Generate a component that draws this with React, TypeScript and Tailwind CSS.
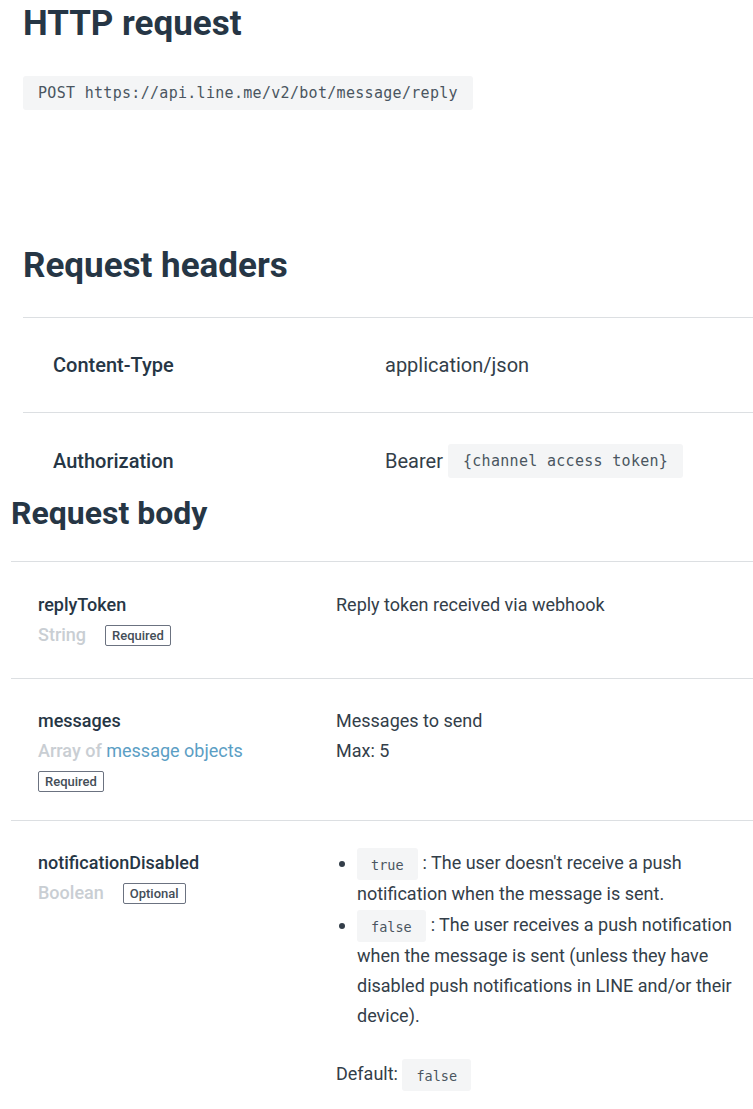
const mono = "font-['DejaVu_Sans_Mono','Liberation_Mono',monospace]"

function Code({ children, className }: { children: React.ReactNode; className?: string }) {
  return (
    <code className={`${mono} inline-block bg-[#f4f5f6] rounded-[3px] text-[#4a5560] ${className ?? ''}`}>
      {children}
    </code>
  )
}

function Badge({ children }: { children: React.ReactNode }) {
  return (
    <span className="inline-block border border-[#6b7280] rounded-[2px] px-[6px] text-[13px] leading-[19px] font-medium text-[#444e58]">
      {children}
    </span>
  )
}

function Chip({ children }: { children: React.ReactNode }) {
  return (
    <Code className="px-[14px] h-[32px] leading-[34px] -my-[1px] align-middle text-[13.5px] mr-[5px]">{children}</Code>
  )
}

export default function App() {
  return (
    <div className="w-[753px] h-[1109px] overflow-hidden bg-white text-[#333e49] font-['Roboto',sans-serif]">
      {/* HTTP request */}
      <section className="px-[23px] pt-[3px]">
        <h2 className="text-[35px] leading-[42px] font-bold text-[#263645]">HTTP request</h2>
        <div className="mt-[31px]">
          <Code className="px-[15px] py-[8px] text-[15px] tracking-[0.3px] leading-[18px]">POST https://api.line.me/v2/bot/message/reply</Code>
        </div>
      </section>

      {/* Request headers */}
      <section className="pl-[23px] pt-[135px]">
        <h2 className="text-[35px] leading-[42px] font-bold text-[#263645]">Request headers</h2>
        <div className="mt-[30px] border-t border-[#dcdfe2]">
          <div className="grid grid-cols-[332px_1fr] items-center h-[95px] border-b border-[#dcdfe2] pl-[30px] text-[20px]">
            <span className="font-medium text-[#263645]">Content-Type</span>
            <span>application/json</span>
          </div>
          <div className="grid grid-cols-[332px_1fr] items-center h-[80px] pt-[15px] pl-[30px] text-[20px]">
            <span className="font-medium text-[#263645]">Authorization</span>
            <span className="flex items-center gap-[5px]">
              Bearer
              <Code className="px-[15px] py-[7px] text-[15px] tracking-[0.3px] leading-[20px]">{'{channel access token}'}</Code>
            </span>
          </div>
        </div>
      </section>

      {/* Request body */}
      <section className="pl-[11px]">
        <h2 className="text-[32px] leading-[40px] font-bold text-[#263645]">Request body</h2>
        <div className="mt-[28px] border-t border-[#dcdfe2] text-[18px] leading-[30px]">
          <div className="grid grid-cols-[298px_1fr] border-b border-[#dcdfe2] pl-[27px] pt-[28px] h-[117px]">
            <div>
              <div className="font-medium text-[#263645]">replyToken</div>
              <div className="flex items-center gap-[19px]">
                <span className="font-medium text-[#c9ced3]">String</span>
                <Badge>Required</Badge>
              </div>
            </div>
            <div>Reply token received via webhook</div>
          </div>

          <div className="grid grid-cols-[298px_1fr] border-b border-[#dcdfe2] pl-[27px] pt-[27px] h-[142px]">
            <div>
              <div className="font-medium text-[#263645]">messages</div>
              <div>
                <span className="font-medium text-[#c9ced3]">Array of </span>
                <span className="text-[#5b9ec4]">message objects</span>
              </div>
              <div className="leading-[22px] mt-[3px]">
                <Badge>Required</Badge>
              </div>
            </div>
            <div>
              <div>Messages to send</div>
              <div>Max: 5</div>
            </div>
          </div>

          <div className="grid grid-cols-[298px_1fr] pl-[27px] pt-[27px]">
            <div>
              <div className="font-medium text-[#263645]">notificationDisabled</div>
              <div className="flex items-center gap-[19px]">
                <span className="font-medium text-[#c9ced3]">Boolean</span>
                <Badge>Optional</Badge>
              </div>
            </div>
            <div className="pr-[12px]">
              <ul className="list-disc pl-[21px] leading-[30.3px]">
                <li>
                  <Chip>true</Chip>: The user doesn't receive a push notification when the message is sent.
                </li>
                <li>
                  <Chip>false</Chip>: The user receives a push notification when the message is sent (unless they have disabled push notifications in LINE and/or their device).
                </li>
              </ul>
              <div className="mt-[27px]">
                Default: <Chip>false</Chip>
              </div>
            </div>
          </div>
        </div>
      </section>
    </div>
  )
}
